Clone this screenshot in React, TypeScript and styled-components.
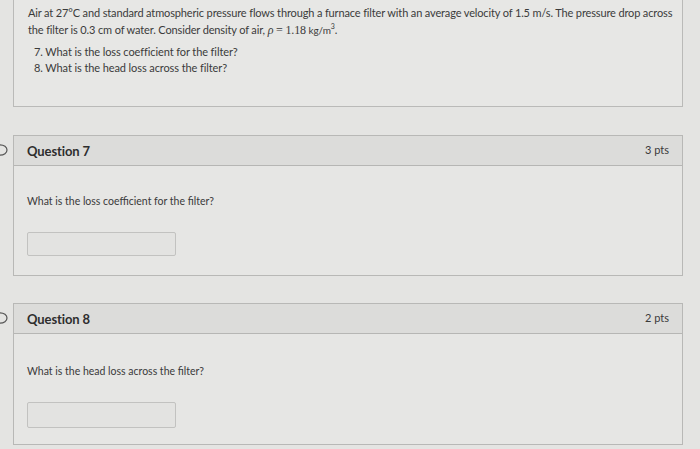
import React from "react";
import styled, { createGlobalStyle } from "styled-components";

const GlobalStyle = createGlobalStyle`
  html, body {
    margin: 0;
    padding: 0;
    background: #e4e4e2;
  }
  body {
    font-family: Lato, "Open Sans", "Liberation Sans", sans-serif;
    color: #3b3b3b;
  }
`;

const Page = styled.div`
  width: 700px;
  height: 449px;
  overflow: hidden;
  display: flex;
  flex-direction: column;
`;

const Row = styled.div<{ $top: number }>`
  display: flex;
  align-items: flex-start;
  margin-top: ${(p) => p.$top}px;
`;

const Gutter = styled.div`
  width: 13px;
  flex: none;
  display: flex;
  justify-content: flex-start;
  padding-top: 8px;
`;

const IntroBox = styled.div`
  width: 670px;
  height: 107px;
  box-sizing: border-box;
  border: 1px solid #babab8;
  border-top: none;
  background: #e7e7e5;
  padding: 4px 10px 0 14px;
  font-size: 11px;
  line-height: 17px;
  letter-spacing: -0.14px;
`;

const Line = styled.div`
  white-space: nowrap;
  height: 17px;
`;

const List = styled.ol`
  margin: 6px 0 0;
  padding-left: 6px;
  list-style: none;
  line-height: 16px;
  letter-spacing: -0.1px;
`;

const Math = styled.span`
  font-family: "Liberation Serif", "DejaVu Serif", serif;
  font-size: 12px;
`;

const Rho = styled.i`
  font-family: "Liberation Serif", "DejaVu Serif", serif;
  font-size: 12px;
`;

const Unit = styled.span`
  font-size: 10px;
`;

const Sup = styled.sup`
  font-size: 7px;
  line-height: 0;
`;

const QuestionBox = styled.div<{ $h: number }>`
  width: 670px;
  height: ${(p) => p.$h}px;
  box-sizing: border-box;
  border: 1px solid #b8b8b6;
  background: #e6e6e4;
  display: flex;
  flex-direction: column;
`;

const Header = styled.div`
  height: 30px;
  flex: none;
  box-sizing: border-box;
  border-bottom: 1px solid #b6b6b4;
  background: #dcdcda;
  display: flex;
  align-items: center;
  justify-content: space-between;
  padding: 1px 13px 0 13px;
`;

const Title = styled.span`
  font-weight: 700;
  font-size: 13px;
  color: #2e2e2e;
  letter-spacing: -0.1px;
`;

const Points = styled.span`
  font-size: 11px;
  color: #3a3a3a;
  margin-top: -4px;
`;

const Body = styled.div<{ $pad: number }>`
  padding: ${(p) => p.$pad}px 13px 0;
  display: flex;
  flex-direction: column;
`;

const Prompt = styled.div`
  font-size: 10.5px;
  line-height: 14px;
  color: #3a3a3a;
`;

const AnswerInput = styled.div<{ $gap: number; $h: number }>`
  margin-top: ${(p) => p.$gap}px;
  width: 149px;
  height: ${(p) => p.$h}px;
  box-sizing: border-box;
  border: 1px solid #c2c2c0;
  border-radius: 2px;
  background: #e3e3e1;
`;

const FlagIcon = () => (
  <svg width="10" height="14" viewBox="0 0 10 14">
    <path
      d="M0 1.8 C4 1.8 7 4.2 7 7 C7 9.8 4 12.2 0 12.2"
      fill="none"
      stroke="#555"
      strokeWidth="1.2"
    />
  </svg>
);

interface IQuestionProps {
  top: number;
  title: string;
  pts: string;
  prompt: string;
  height: number;
  bodyPad: number;
  inputGap: number;
  inputH: number;
}

const Question: React.FC<IQuestionProps> = ({
  top,
  title,
  pts,
  prompt,
  height,
  bodyPad,
  inputGap,
  inputH,
}) => (
  <Row $top={top}>
    <Gutter>
      <FlagIcon />
    </Gutter>
    <QuestionBox $h={height}>
      <Header>
        <Title>{title}</Title>
        <Points>{pts}</Points>
      </Header>
      <Body $pad={bodyPad}>
        <Prompt>{prompt}</Prompt>
        <AnswerInput $gap={inputGap} $h={inputH} />
      </Body>
    </QuestionBox>
  </Row>
);

const App: React.FC = () => {
  return (
    <>
      <GlobalStyle />
      <Page>
        <Row $top={0}>
          <Gutter />
          <IntroBox>
            <Line>
              Air at 27°C and standard atmospheric pressure flows through a
              furnace filter with an average velocity of 1.5 m/s. The pressure
              drop across
            </Line>
            <Line>
              the filter is 0.3 cm of water. Consider density of air,{" "}
              <Rho>ρ</Rho> <Math>= 1.18</Math> <Unit>kg/m</Unit>
              <Sup>3</Sup>.
            </Line>
            <List>
              <li>7. What is the loss coefficient for the filter?</li>
              <li>8. What is the head loss across the filter?</li>
            </List>
          </IntroBox>
        </Row>
        <Question
          top={28}
          title="Question 7"
          pts="3 pts"
          prompt="What is the loss coefficient for the filter?"
          height={141}
          bodyPad={28}
          inputGap={24}
          inputH={24}
        />
        <Question
          top={27}
          title="Question 8"
          pts="2 pts"
          prompt="What is the head loss across the filter?"
          height={142}
          bodyPad={30}
          inputGap={24}
          inputH={26}
        />
      </Page>
    </>
  );
};

export default App;
